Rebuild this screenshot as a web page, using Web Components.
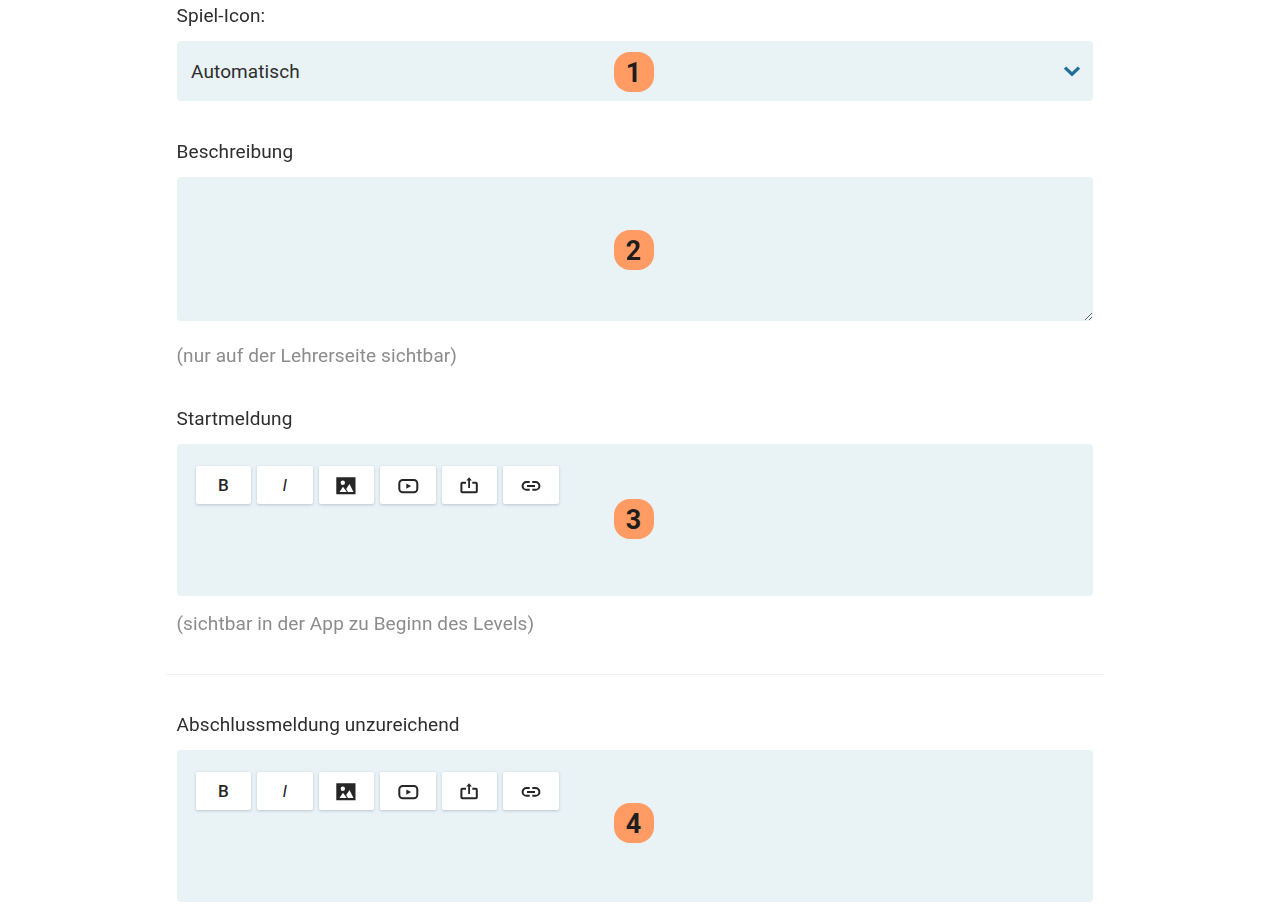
<!DOCTYPE html>
<html lang="de"><head><meta charset="utf-8"><title>Level</title>
<style>
html,body{margin:0;background:#fff}
body{font-family:Roboto,"Liberation Sans",sans-serif;color:#333;height:913px;overflow:hidden}
</style></head><body>
<level-form>
  <form-field label="Spiel-Icon:" gap="39">
    <select-box value="Automatisch" badge="1"></select-box>
  </form-field>
  <form-field label="Beschreibung" hint="(nur auf der Lehrerseite sichtbar)" hint-gap="23" gap="39">
    <text-box badge="2"></text-box>
  </form-field>
  <form-field label="Startmeldung" hint="(sichtbar in der App zu Beginn des Levels)" hint-gap="16" gap="38">
    <rich-box badge="3" shift="-1"></rich-box>
  </form-field>
  <form-rule></form-rule>
  <form-field label="Abschlussmeldung unzureichend">
    <rich-box badge="4" shift="-3"></rich-box>
  </form-field>
</level-form>
<script>
function el(name,html){customElements.define(name,class extends HTMLElement{
  connectedCallback(){if(this.shadowRoot)return;this.attachShadow({mode:'open'}).innerHTML=html(this)}
})}
const attr=(e,a,d='')=>e.getAttribute(a)??d;
const badge=e=>`<step-badge style="--shift:${attr(e,'shift',0)}px">${attr(e,'badge')}</step-badge>`;

el('level-form',()=>`<style>:host{display:block;width:916.5px;margin:0 0 0 176.5px;padding-top:4px;filter:blur(.35px)}</style><slot></slot>`);

el('form-field',e=>`<style>
:host{display:block}
.l{font-size:19px;line-height:24px;letter-spacing:.11px;color:#2e2e2e;margin-bottom:13px}
.h{font-size:19px;line-height:24px;letter-spacing:.11px;color:#8c8c8c}
</style>
<div class="l">${attr(e,'label')}</div>
<slot></slot>
${e.hasAttribute('hint')?`<div class="h" style="margin-top:${attr(e,'hint-gap')}px">${attr(e,'hint')}</div>`:''}
<div style="height:${attr(e,'gap',0)}px"></div>`);

el('form-rule',()=>`<style>:host{display:block;height:1px;background:#eef0f1;margin:0 -11px 38px -10.5px}</style>`);

el('step-badge',()=>`<style>
:host{position:absolute;left:437px;top:50%;margin-top:calc(-20px + var(--shift,0px));width:40px;height:40px;
border-radius:16px;background:#ff9b63;color:#1e1e1e;font:700 27px/42px Roboto,"Liberation Sans",sans-serif;text-align:center}
</style><slot></slot>`);

el('select-box',e=>`<style>
:host{display:flex;position:relative;align-items:center;justify-content:space-between;height:60px;background:#e9f2f5;border-radius:4px;padding:0 11px 0 14.5px;box-sizing:border-box}
span{font-size:19px;letter-spacing:.11px;color:#2e2e2e}
svg{width:20px;height:20px;display:block}
</style><span>${attr(e,'value')}</span>
<svg viewBox="0 0 20 20"><path d="M3 6.6 10 13.2l7-6.6" fill="none" stroke="#1f6d9f" stroke-width="3.2"/></svg>
<step-badge style="--shift:1px">${attr(e,'badge')}</step-badge>`);

el('text-box',e=>`<style>
:host{display:block;position:relative;height:144px}
textarea{display:block;width:100%;height:100%;box-sizing:border-box;border:0;outline:0;margin:0;background:#e9f2f5;border-radius:4px;resize:vertical}
</style><textarea aria-label="Beschreibung"></textarea><step-badge style="--shift:1px">${attr(e,'badge')}</step-badge>`);

el('tool-button',()=>`<style>
:host{display:flex;align-items:center;justify-content:center;width:55.5px;height:38.5px;background:#fff;border-radius:2px;box-shadow:0 1px 3px rgba(60,90,110,.28);color:#262626}
</style><slot></slot>`);

el('rich-box',e=>`<style>
:host{display:block;position:relative;height:152px;background:#e9f2f5;border-radius:4px;box-sizing:border-box;padding:21.7px 19px}
.bar{display:flex;gap:6px}
tool-button{font:500 17px/1 Roboto,"Liberation Sans",sans-serif}
.t{padding-top:2px}
svg{display:block;width:24px;height:24px;fill:#262626}
i{font:italic 400 17px/1 Roboto,"Liberation Sans",sans-serif}
</style>
<div class="bar">
<tool-button><span class="t">B</span></tool-button>
<tool-button><i class="t">I</i></tool-button>
<tool-button><svg viewBox="0 0 24 24"><path fill-rule="evenodd" d="M2.3 4.3h19.2v17H2.3zM8.8 7.5a2.2 2.2 0 1 0 0 4.4 2.2 2.2 0 0 0 0-4.4zm6.7 3.4-3.3 5.1 1.8 3h5.5zM9 13.7 5.5 19h7.3z"/></svg></tool-button>
<tool-button><svg viewBox="0 0 24 24"><rect x="3.3" y="7" width="18" height="12.3" rx="3.5" fill="none" stroke="#262626" stroke-width="2"/><path d="M10.3 10.4l4.8 2.7-4.8 2.7z"/></svg></tool-button>
<tool-button><svg viewBox="0 0 24 24"><path d="M9 9.7H5.4a1 1 0 0 0-1 1v7.6a1 1 0 0 0 1 1h13.4a1 1 0 0 0 1-1v-7.6a1 1 0 0 0-1-1h-3.5" fill="none" stroke="#262626" stroke-width="2"/><path d="M12.1 15V6.5" stroke="#262626" stroke-width="1.8"/><path d="M12.1 4.2l2.8 3.2H9.3z"/></svg></tool-button>
<tool-button><svg viewBox="0 0 24 24"><path d="M10.7 9H7.5a3.9 3.9 0 0 0 0 7.8h3.2M13.3 9h3.2a3.9 3.9 0 0 1 0 7.8h-3.2M8 12.9h8" fill="none" stroke="#262626" stroke-width="2"/></svg></tool-button>
</div>${badge(e)}`);
</script>
</body></html>
